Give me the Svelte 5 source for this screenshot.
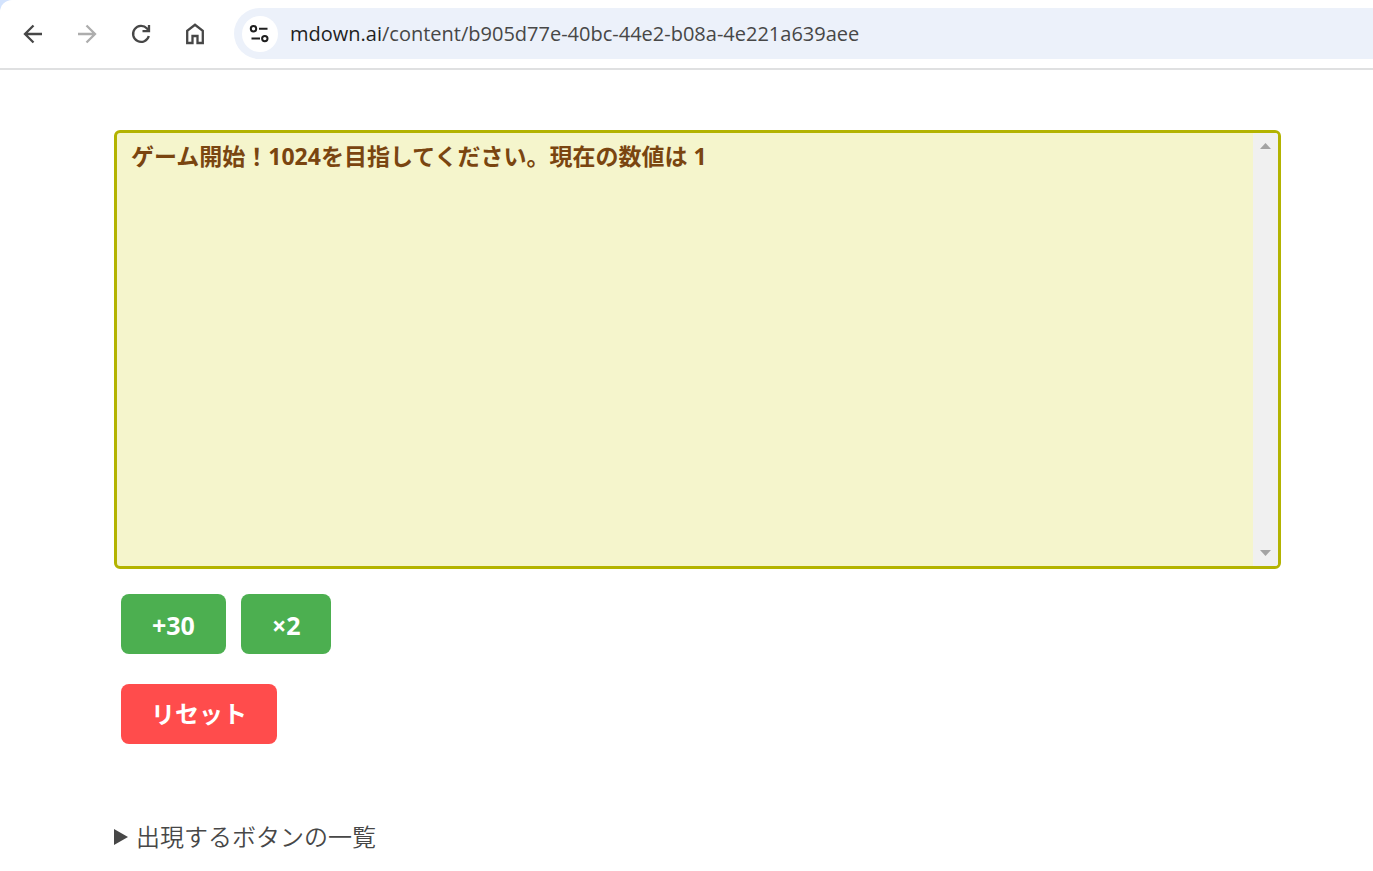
<script>
  const GOAL = 1024;
  let value = $state(1);
  let listOpen = $state(false);
  let messages = $state([`ゲーム開始！${GOAL}を目指してください。現在の数値は 1`]);

  const actions = [
    { label: '+30', apply: (n) => n + 30 },
    { label: '×2', apply: (n) => n * 2 }
  ];

  function play(action) {
    value = action.apply(value);
    messages.push(`${action.label} → ${value}`);
  }

  function reset() {
    value = 1;
    messages = [`ゲーム開始！${GOAL}を目指してください。現在の数値は 1`];
  }
</script>

<div class="corner">
  <header class="toolbar">
    <nav class="nav" aria-label="ブラウザー">
      <button class="icon" aria-label="戻る">
        <svg width="24" height="24" viewBox="0 0 24 24"><path d="M21 12H4M12.5 3.5L4 12l8.500 8.500" /></svg>
      </button>
      <button class="icon muted" aria-label="進む">
        <svg width="24" height="24" viewBox="0 0 24 24"><path d="M3 12h17M11.500 3.500L20 12l-8.500 8.500" /></svg>
      </button>
      <button class="icon" aria-label="再読み込み">
        <svg width="24" height="24" viewBox="0 0 24 24"><path d="M19.800 14A8 8 0 1 1 18 6.500L20 8.700M20 3v6.200h-6.500" /></svg>
      </button>
      <button class="icon" aria-label="ホーム">
        <svg width="24" height="24" viewBox="0 0 24 24"><path d="M4.200 21V8.800L12 2.800l7.800 6V21h-5.300v-7h-5v7z" /></svg>
      </button>
    </nav>
    <div class="address">
      <button class="site" aria-label="サイト情報">
        <svg width="24" height="24" viewBox="0 0 24 24"><circle cx="5.500" cy="6.800" r="2.700" /><path d="M11 6.800h8.500M3.500 16.600h8.500" /><circle cx="16.800" cy="16.600" r="2.700" /></svg>
      </button>
      <a class="url" href="/content/b905d77e-40bc-44e2-b08a-4e221a639aee"><span class="host">mdown.ai</span>/content/b905d77e-40bc-44e2-b08a-4e221a639aee</a>
    </div>
  </header>
</div>

<main>
  <div class="log">
    <div class="messages" role="log">
      {#each messages as message}
        <p>{message}</p>
      {/each}
    </div>
    <div class="track" aria-hidden="true">
      <svg width="11" height="6" viewBox="0 0 11 6"><path d="M5.500 0L11 6H0z" /></svg>
      <svg width="11" height="6" viewBox="0 0 11 6"><path d="M0 0h11L5.500 6z" /></svg>
    </div>
  </div>

  <div class="row">
    {#each actions as action}
      <button class="action step" onclick={() => play(action)}>{action.label}</button>
    {/each}
  </div>
  <div class="row">
    <button class="action reset" onclick={reset}>リセット</button>
  </div>

  <details bind:open={listOpen}>
    <summary><svg class="marker" width="14" height="16" viewBox="0 0 14 16" aria-hidden="true"><path d="M0 0l14 8-14 8z" /></svg>出現するボタンの一覧</summary>
    {#if listOpen}
      <ul>
        {#each actions as action}
          <li>{action.label}</li>
        {/each}
      </ul>
    {/if}
  </details>
</main>

<style>
  :global(body) {
    margin: 0;
    background: #fff;
    color: #474747;
    font-family: "Open Sans", "Noto Sans CJK JP", sans-serif;
  }

  button {
    border: 0;
    padding: 0;
    font-family: inherit;
    cursor: pointer;
  }

  .corner {
    background: #d3e3fd;
  }

  .toolbar {
    display: flex;
    align-items: center;
    gap: 24px;
    padding: 8px 0 9px 18px;
    border-bottom: 2px solid #dfe0e1;
    border-top-left-radius: 12px;
    background: #fff;
  }

  .nav {
    display: flex;
    gap: 24px;
  }

  .icon {
    display: grid;
    place-items: center;
    width: 30px;
    height: 30px;
    background: none;
  }

  .icon svg,
  .site svg {
    fill: none;
    stroke: #474747;
    stroke-width: 2.3;
  }

  .icon.muted svg {
    stroke: #adadad;
  }

  .address {
    flex: 1;
    display: flex;
    align-items: center;
    gap: 12px;
    box-sizing: border-box;
    height: 51px;
    min-width: 0;
    padding-left: 8px;
    border-radius: 26px 0 0 26px;
    background: #ecf1fa;
  }

  .site {
    display: grid;
    place-items: center;
    flex: none;
    width: 36px;
    height: 36px;
    border-radius: 50%;
    background: #fff;
  }

  .site svg {
    stroke: #1f1f1f;
    stroke-width: 2;
  }

  .url {
    overflow: hidden;
    white-space: nowrap;
    color: #474747;
    font-size: 20px;
    line-height: 28px;
    text-decoration: none;
  }

  .host {
    color: #1f1f1f;
  }

  main {
    padding: 60px 92px 16px 114px;
  }

  .log {
    display: flex;
    box-sizing: border-box;
    min-height: 439px;
    border: 3px solid #b3b300;
    border-radius: 6px;
    background: #f5f5cc;
    overflow: hidden;
  }

  .messages {
    flex: 1;
    padding: 6px 14px;
    color: #7a4510;
    font-size: 23px;
    font-weight: 700;
    line-height: 34px;
  }

  p {
    margin: 0;
  }

  .track {
    display: flex;
    flex-direction: column;
    align-items: center;
    justify-content: space-between;
    width: 25px;
    padding: 10px 0;
    background: #f0f0f0;
  }

  .track svg {
    fill: #a3a3a3;
  }

  .row {
    display: flex;
    gap: 15px;
    padding: 25px 7px 5px;
  }

  .action {
    height: 60px;
    padding: 0 30px;
    border-radius: 8px;
    background: #4caf50;
    color: #fff;
    font-size: 24px;
    font-weight: 700;
    line-height: 36px;
  }

  .step {
    padding: 2px 31px 0;
    font-size: 25px;
  }

  .reset {
    background: #ff4c4c;
  }

  details {
    padding-top: 70px;
    font-size: 24px;
    font-weight: 350;
    line-height: 36px;
  }

  summary {
    display: flex;
    align-items: center;
    gap: 8px;
    list-style: none;
    cursor: pointer;
  }

  .marker {
    fill: #474747;
  }

  details[open] .marker {
    transform: rotate(90deg);
  }

  ul {
    margin: 8px 0;
  }
</style>
